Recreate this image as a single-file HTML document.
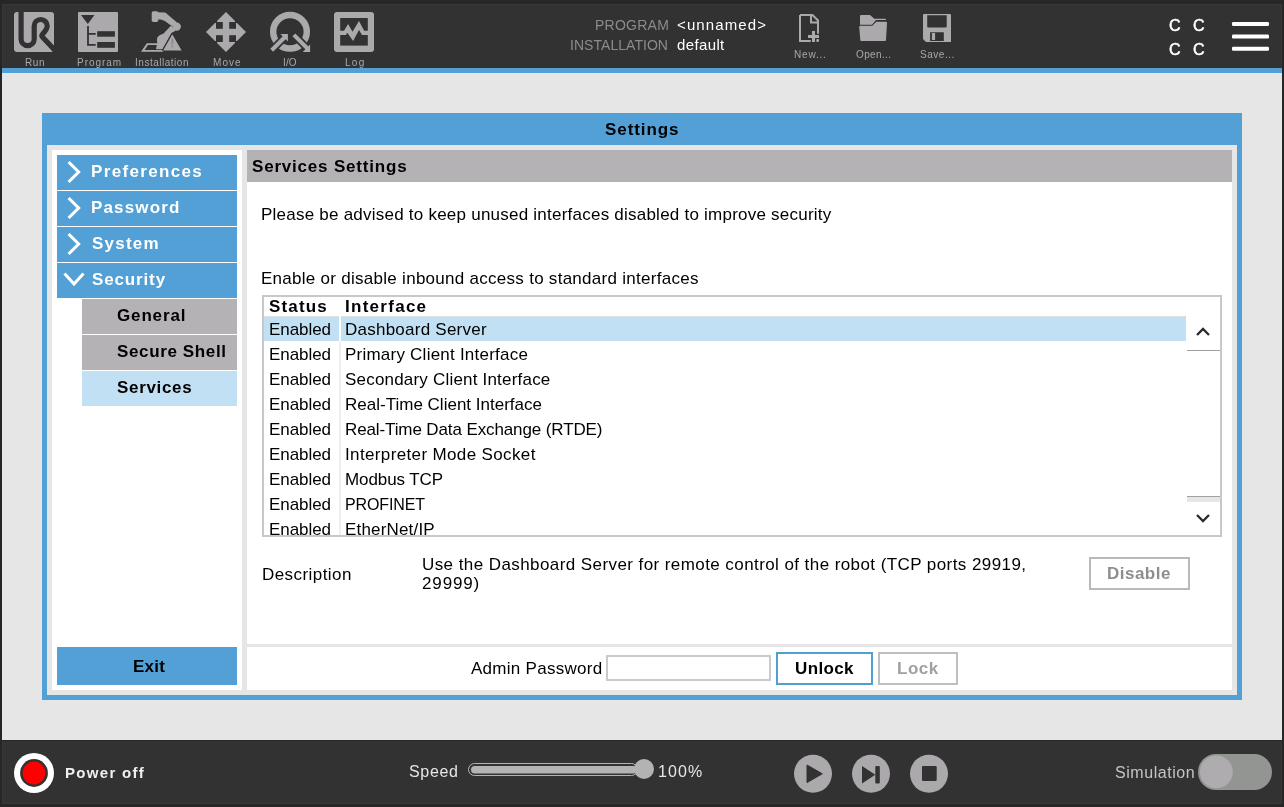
<!DOCTYPE html>
<html><head><meta charset="utf-8">
<style>
*{box-sizing:border-box;margin:0;padding:0}
html,body{width:1284px;height:807px;overflow:hidden}
body{background:#262626;position:relative;font-family:"Liberation Sans",sans-serif;color:#000}
.a{position:absolute}
.t{position:absolute;white-space:nowrap;line-height:1;will-change:transform}
svg{position:absolute;left:0;top:0}
</style></head><body>

<div class="a" style="left:2px;top:4px;width:1280px;height:64px;background:#323232"></div>
<div class="a" style="left:2px;top:68px;width:1280px;height:5px;background:#52a0d5"></div>
<div class="a" style="left:2px;top:73px;width:1280px;height:667px;background:#e6e6e6"></div>
<div class="a" style="left:2px;top:741px;width:1280px;height:63px;background:#323232"></div>
<div class="a" style="left:2px;top:4px;width:1280px;height:1px;background:#373737"></div>
<div class="a" style="left:2px;top:4px;width:1px;height:64px;background:#373737"></div>
<div class="a" style="left:1281px;top:4px;width:1px;height:64px;background:#373737"></div>
<div class="a" style="left:2px;top:803px;width:1280px;height:1px;background:#373737"></div>
<div class="a" style="left:2px;top:741px;width:1px;height:63px;background:#373737"></div>
<div class="a" style="left:1281px;top:741px;width:1px;height:63px;background:#373737"></div>
<svg width="1284" height="75" viewBox="0 0 1284 75">
<rect x="14" y="12" width="40" height="40" rx="3" fill="#aba9ac"/>
<path d="M21.1,10 V39.05 A6.55,6.55 0 0 0 34.2,39.05 V26 A6.5,6.5 0 0 1 47.2,26 C47.2,28.8 45,31.5 42.7,34 C41.7,35.1 41.8,36.3 42.7,37.2 L57,52.5" stroke="#323232" stroke-width="5.2" fill="none"/>
<rect x="78" y="12" width="40" height="40" rx="1" fill="#aba9ac"/>
<path d="M81,15 H94.5 L87.8,24 Z" fill="#323232"/>
<path d="M88,26 V44.8 H95.7 M88,33.8 H95.7" stroke="#323232" stroke-width="1.8" fill="none"/>
<rect x="97.2" y="31.2" width="17.7" height="5.5" fill="#323232"/><rect x="97.2" y="42" width="17.7" height="5.8" fill="#323232"/>
<g fill="#aba9ac">
<rect x="151.7" y="11.3" width="6.6" height="10.7" rx="1.8"/>
<path d="M157.5,12.2 L164.8,12.6 Q166,12.9 167,14 L176.5,22 L177,27 L171,25.6 L164.8,21 Q162,19.2 157.5,19.3 Z"/>
<circle cx="176.7" cy="26.6" r="4.2"/>
<path d="M171.2,25.6 L163.3,33.8 Q159.5,34.6 157.6,37 Q156.4,39.5 157.3,42.6 L156,49.3 H162.4 L171.5,32.9 L175.5,30.8 Z"/>
<path d="M146.8,43.3 H157.5 V45.1 H148 L144.6,50 H163.2 V51.8 H141 Z"/>
</g>
<path d="M172.3,33.3 L182,50.4 H162.8 Z" fill="#aba9ac" stroke="#323232" stroke-width="1.4" stroke-linejoin="round"/>
<path d="M172.3,34.5 L181.6,50.6 H163.2 Z" fill="#aba9ac"/>
<rect x="171.4" y="38.3" width="1.9" height="6.3" rx="0.8" fill="#8e8c8f"/><rect x="171.4" y="45.6" width="1.9" height="1.8" fill="#8e8c8f"/>
<g fill="#aba9ac">
<path d="M226,12 L235,21 V22 H217 V21 Z"/>
<path d="M226,52 L235,43 V42 H217 V43 Z"/>
<path d="M206,32 L215,23 H216 V41 H215 Z"/>
<path d="M246,32 L237,23 H236 V41 H237 Z"/>
<rect x="222.8" y="21" width="6.4" height="22"/><rect x="215" y="28.8" width="22" height="6.4"/>
</g>
<circle cx="290" cy="31.75" r="16.8" stroke="#aba9ac" stroke-width="6.4" fill="none"/>
<path d="M271,51 L286,36 M293.5,34.5 L308,49" stroke="#323232" stroke-width="7.6" fill="none"/>
<path d="M271.7,50.3 L286.5,35.5 M293.9,34.9 L308.5,49.5" stroke="#aba9ac" stroke-width="4.1" fill="none"/>
<path d="M280.4,34.1 H287.9 V41.6 Z" fill="#aba9ac"/>
<path d="M310.1,44.6 V52 H302.7 Z" fill="#aba9ac"/>
<rect x="334" y="12" width="40" height="40" rx="3" fill="#aba9ac"/>
<rect x="340.2" y="18" width="27.6" height="27.6" fill="#323232"/>
<path d="M340,30.7 H344 L348.1,24.1 L352.5,31.7 L359,21 L364.2,30.7 H368 V35 H362 L359,30.1 L353.1,41 L347.3,32.7 L345.9,35 H340 Z" fill="#aba9ac"/>
<path d="M800,15 H812.5 L818,20.5 V33.8 M810.8,41 H800 V15 M811,15 V22.4 H818" stroke="#aba9ac" stroke-width="2" fill="none"/>
<rect x="812" y="31" width="3" height="11" fill="#aba9ac"/><rect x="808" y="35" width="11" height="3" fill="#aba9ac"/><rect x="816.3" y="39" width="2.7" height="3" rx="1" fill="#aba9ac"/>
<path d="M860,16 Q860,15 861,15 H870 L874.3,18.7 H885 Q886,18.7 886,20 V20 H876 L872,24.8 H860 Z" fill="#aba9ac"/>
<path d="M859.2,27 Q859.2,25.8 860.5,25.8 H872.3 L876.3,21.8 H886 Q887,21.8 887,23 L886,40 Q886,41 885,41 H861 Q860.4,41 860.3,40 Z" fill="#aba9ac"/>
<path fill-rule="evenodd" fill="#aba9ac" d="M924,14 H950 Q951,14 951,15 V42 H926 L923,39 V15 Q923,14 924,14 Z M927.2,15.2 H946.7 V26.5 Q946.7,27.6 945.6,27.6 H928.3 Q927.2,27.6 927.2,26.5 Z M930.1,32.3 H943.8 V41 H930.1 Z"/>
<rect x="931.9" y="33" width="3.2" height="7" fill="#aba9ac"/>
<rect x="1232" y="22" width="37" height="4" rx="1.2" fill="#fff"/>
<rect x="1232" y="34.5" width="37" height="4" rx="1.2" fill="#fff"/>
<rect x="1232" y="46.7" width="37" height="4" rx="1.2" fill="#fff"/>
</svg>
<div class="t" style="left:25.00px;top:58px;font-size:10px;letter-spacing:0.625px;color:#a9a7aa;">Run</div>
<div class="t" style="left:76.80px;top:58px;font-size:10px;letter-spacing:0.967px;color:#a9a7aa;">Program</div>
<div class="t" style="left:135.40px;top:58px;font-size:10px;letter-spacing:0.518px;color:#a9a7aa;">Installation</div>
<div class="t" style="left:212.80px;top:58px;font-size:10px;letter-spacing:1.050px;color:#a9a7aa;">Move</div>
<div class="t" style="left:282.90px;top:58px;font-size:10px;letter-spacing:0.125px;color:#a9a7aa;">I/O</div>
<div class="t" style="left:344.80px;top:58px;font-size:10px;letter-spacing:1.275px;color:#a9a7aa;">Log</div>
<div class="t" style="left:594.50px;top:18px;font-size:14px;letter-spacing:0.242px;color:#8c8c8c;">PROGRAM</div>
<div class="t" style="left:570.35px;top:38px;font-size:14px;letter-spacing:0.041px;color:#8c8c8c;">INSTALLATION</div>
<div class="t" style="left:677.30px;top:17px;font-size:15px;letter-spacing:1.119px;color:#fff;">&lt;unnamed&gt;</div>
<div class="t" style="left:677.40px;top:37px;font-size:15px;letter-spacing:0.375px;color:#fff;">default</div>
<div class="t" style="left:793.60px;top:50px;font-size:10px;letter-spacing:0.820px;color:#a9a7aa;">New...</div>
<div class="t" style="left:856.35px;top:50px;font-size:10px;letter-spacing:0.375px;color:#a9a7aa;">Open...</div>
<div class="t" style="left:920.15px;top:50px;font-size:10px;letter-spacing:0.533px;color:#a9a7aa;">Save...</div>
<div class="t" style="left:1168.80px;top:18px;font-size:16px;letter-spacing:0.000px;color:#fff;-webkit-text-stroke:0.5px #fff;">C</div>
<div class="t" style="left:1192.80px;top:18px;font-size:16px;letter-spacing:0.000px;color:#fff;-webkit-text-stroke:0.5px #fff;">C</div>
<div class="t" style="left:1168.80px;top:42px;font-size:16px;letter-spacing:0.000px;color:#fff;-webkit-text-stroke:0.5px #fff;">C</div>
<div class="t" style="left:1192.80px;top:42px;font-size:16px;letter-spacing:0.000px;color:#fff;-webkit-text-stroke:0.5px #fff;">C</div>
<div class="a" style="left:42px;top:113px;width:1200px;height:587px;background:#52a0d5"></div>
<div class="a" style="left:47px;top:145px;width:1190px;height:550px;background:#e6e6e6"></div>
<div class="t" style="left:605.45px;top:121px;font-size:17px;font-weight:bold;letter-spacing:0.921px;color:#000;">Settings</div>
<div class="a" style="left:52px;top:150px;width:190px;height:540px;background:#fff"></div>
<div class="a" style="left:247px;top:150px;width:985px;height:494px;background:#fff"></div>
<div class="a" style="left:247px;top:150px;width:985px;height:32px;background:#b4b2b5"></div>
<div class="a" style="left:247px;top:647px;width:985px;height:43px;background:#fff"></div>
<div class="a" style="left:57px;top:155px;width:180px;height:35px;background:#52a0d5"></div>
<div class="t" style="left:90.90px;top:163px;font-size:17px;font-weight:bold;letter-spacing:1.340px;color:#fff;">Preferences</div>
<div class="a" style="left:57px;top:191px;width:180px;height:35px;background:#52a0d5"></div>
<div class="t" style="left:90.90px;top:199px;font-size:17px;font-weight:bold;letter-spacing:1.164px;color:#fff;">Password</div>
<div class="a" style="left:57px;top:227px;width:180px;height:35px;background:#52a0d5"></div>
<div class="t" style="left:91.55px;top:235px;font-size:17px;font-weight:bold;letter-spacing:1.240px;color:#fff;">System</div>
<div class="a" style="left:57px;top:263px;width:180px;height:35px;background:#52a0d5"></div>
<div class="t" style="left:91.55px;top:271px;font-size:17px;font-weight:bold;letter-spacing:0.857px;color:#fff;">Security</div>
<svg width="300" height="300" viewBox="0 0 300 300" style="left:0;top:0">
<path d="M68.6,162.0 L78.6,172.0 L68.6,182.0" stroke="#fff" stroke-width="3.1" fill="none"/>
<path d="M68.6,198.0 L78.6,208.0 L68.6,218.0" stroke="#fff" stroke-width="3.1" fill="none"/>
<path d="M68.6,234.0 L78.6,244.0 L68.6,254.0" stroke="#fff" stroke-width="3.1" fill="none"/>
<path d="M64.5,273.5 L74,284 L83.5,273.5" stroke="#fff" stroke-width="3" fill="none"/>
</svg>
<div class="a" style="left:82px;top:299px;width:155px;height:35px;background:#b4b2b5"></div>
<div class="t" style="left:116.95px;top:307px;font-size:17px;font-weight:bold;letter-spacing:0.850px;color:#000;">General</div>
<div class="a" style="left:82px;top:335px;width:155px;height:35px;background:#b4b2b5"></div>
<div class="t" style="left:117.15px;top:343px;font-size:17px;font-weight:bold;letter-spacing:0.632px;color:#000;">Secure Shell</div>
<div class="a" style="left:82px;top:371px;width:155px;height:35px;background:#c2e0f4"></div>
<div class="t" style="left:117.15px;top:379px;font-size:17px;font-weight:bold;letter-spacing:0.679px;color:#000;">Services</div>
<div class="a" style="left:57px;top:647px;width:180px;height:38px;background:#52a0d5"></div>
<div class="t" style="left:133.30px;top:658px;font-size:17px;font-weight:bold;letter-spacing:0.233px;color:#000;">Exit</div>
<div class="t" style="left:252.05px;top:158px;font-size:17px;font-weight:bold;letter-spacing:0.803px;color:#000;">Services Settings</div>
<div class="t" style="left:261.05px;top:206px;font-size:17px;letter-spacing:0.233px;color:#000;">Please be advised to keep unused interfaces disabled to improve security</div>
<div class="t" style="left:261.05px;top:270px;font-size:17px;letter-spacing:0.278px;color:#000;">Enable or disable inbound access to standard interfaces</div>
<div class="a" style="left:262px;top:295px;width:960px;height:242px;border:2px solid #c8c8c8;background:#fff"></div>
<div class="a" style="left:264px;top:316px;width:922px;height:25px;background:#c2e0f4"></div>
<div class="a" style="left:264px;top:316px;width:922px;height:1px;background:#e0e0e0"></div>
<div class="a" style="left:339px;top:316px;width:2px;height:25px;background:#fff"></div>
<div class="a" style="left:339px;top:341px;width:2px;height:194px;background:#f0f0f0"></div>
<div class="t" style="left:269.25px;top:298px;font-size:17px;font-weight:bold;letter-spacing:1.170px;color:#000;">Status</div>
<div class="t" style="left:344.50px;top:298px;font-size:17px;font-weight:bold;letter-spacing:1.275px;color:#000;">Interface</div>
<div class="a" style="left:264px;top:297px;width:922px;height:238px;overflow:hidden">
<div class="t" style="margin-left:-264px;left:268.95px;top:24px;font-size:17px;letter-spacing:-0.067px;color:#000;">Enabled</div>
<div class="t" style="margin-left:-264px;left:344.85px;top:24px;font-size:17px;letter-spacing:0.243px;color:#000;">Dashboard Server</div>
<div class="t" style="margin-left:-264px;left:268.95px;top:49px;font-size:17px;letter-spacing:-0.067px;color:#000;">Enabled</div>
<div class="t" style="margin-left:-264px;left:344.85px;top:49px;font-size:17px;letter-spacing:0.230px;color:#000;">Primary Client Interface</div>
<div class="t" style="margin-left:-264px;left:268.95px;top:74px;font-size:17px;letter-spacing:-0.067px;color:#000;">Enabled</div>
<div class="t" style="margin-left:-264px;left:345.45px;top:74px;font-size:17px;letter-spacing:0.198px;color:#000;">Secondary Client Interface</div>
<div class="t" style="margin-left:-264px;left:268.95px;top:99px;font-size:17px;letter-spacing:-0.067px;color:#000;">Enabled</div>
<div class="t" style="margin-left:-264px;left:344.85px;top:99px;font-size:17px;letter-spacing:0.008px;color:#000;">Real-Time Client Interface</div>
<div class="t" style="margin-left:-264px;left:268.95px;top:124px;font-size:17px;letter-spacing:-0.067px;color:#000;">Enabled</div>
<div class="t" style="margin-left:-264px;left:344.85px;top:124px;font-size:17px;letter-spacing:-0.114px;color:#000;">Real-Time Data Exchange (RTDE)</div>
<div class="t" style="margin-left:-264px;left:268.95px;top:149px;font-size:17px;letter-spacing:-0.067px;color:#000;">Enabled</div>
<div class="t" style="margin-left:-264px;left:344.65px;top:149px;font-size:17px;letter-spacing:0.364px;color:#000;">Interpreter Mode Socket</div>
<div class="t" style="margin-left:-264px;left:268.95px;top:174px;font-size:17px;letter-spacing:-0.067px;color:#000;">Enabled</div>
<div class="t" style="margin-left:-264px;left:344.85px;top:174px;font-size:17px;letter-spacing:-0.094px;color:#000;">Modbus TCP</div>
<div class="t" style="margin-left:-264px;left:268.95px;top:199px;font-size:17px;letter-spacing:-0.067px;color:#000;">Enabled</div>
<div class="t" style="margin-left:-264px;left:344.90px;top:200px;font-size:16px;letter-spacing:-0.121px;color:#000;">PROFINET</div>
<div class="t" style="margin-left:-264px;left:268.95px;top:224px;font-size:17px;letter-spacing:-0.067px;color:#000;">Enabled</div>
<div class="t" style="margin-left:-264px;left:344.85px;top:224px;font-size:17px;letter-spacing:0.175px;color:#000;">EtherNet/IP</div>
</div>
<div class="a" style="left:1187px;top:350px;width:33px;height:1px;background:#a0a0a0"></div>
<div class="a" style="left:1187px;top:496px;width:33px;height:1px;background:#a0a0a0"></div>
<div class="a" style="left:1187px;top:497px;width:33px;height:5px;background:#e6e6e6"></div>
<svg width="1284" height="600" viewBox="0 0 1284 600">
<path d="M1197,335 L1203,329 L1209,335" stroke="#2a2a2a" stroke-width="2.3" fill="none"/>
<path d="M1197,515 L1203,521 L1209,515" stroke="#2a2a2a" stroke-width="2.3" fill="none"/>
</svg>
<div class="t" style="left:261.75px;top:566px;font-size:17px;letter-spacing:0.435px;color:#000;">Description</div>
<div class="t" style="left:421.70px;top:556px;font-size:17px;letter-spacing:0.421px;color:#000;">Use the Dashboard Server for remote control of the robot (TCP ports 29919,</div>
<div class="t" style="left:422.15px;top:575px;font-size:17px;letter-spacing:0.870px;color:#000;">29999)</div>
<div class="a" style="left:1089px;top:557px;width:101px;height:33px;border:2px solid #bab8bb;background:#fff"></div>
<div class="t" style="left:1107.40px;top:565px;font-size:17px;font-weight:bold;letter-spacing:0.483px;color:#8e8e8e;">Disable</div>
<div class="t" style="left:470.80px;top:660px;font-size:17px;letter-spacing:0.285px;color:#000;">Admin Password</div>
<div class="a" style="left:606px;top:655px;width:165px;height:26px;border:2px solid #cacaca;background:#fff"></div>
<div class="a" style="left:776px;top:652px;width:97px;height:33px;border:2px solid #4f9ed4;background:#fff"></div>
<div class="t" style="left:794.70px;top:660px;font-size:17px;font-weight:bold;letter-spacing:0.380px;color:#000;">Unlock</div>
<div class="a" style="left:878px;top:652px;width:80px;height:33px;border:2px solid #c0bec1;background:#fff"></div>
<div class="t" style="left:896.60px;top:660px;font-size:17px;font-weight:bold;letter-spacing:0.533px;color:#a0a0a0;">Lock</div>
<svg width="1284" height="807" viewBox="0 0 1284 807">
<circle cx="34" cy="773" r="20" fill="#fff"/><circle cx="34" cy="773" r="13.9" fill="#323232"/><circle cx="34" cy="773" r="11.4" fill="#f00"/>
<rect x="468.5" y="763.5" width="169" height="12" rx="6" fill="none" stroke="#b4b2b5" stroke-width="1"/>
<rect x="471" y="766" width="166" height="7.5" rx="3.75" fill="#b4b2b5"/>
<circle cx="644" cy="769" r="10" fill="#b4b2b5"/>
<circle cx="813" cy="773.8" r="19" fill="#aba9ac"/><path d="M807,765 L822.3,773.8 L807,782.6 Z" fill="#323232" stroke="#323232" stroke-width="1" stroke-linejoin="round"/>
<circle cx="871" cy="773.8" r="19" fill="#aba9ac"/><path d="M862,766 L875.3,774.8 L862,783.5 Z" fill="#323232"/><rect x="875.3" y="766" width="4.5" height="17.5" rx="1" fill="#323232"/>
<circle cx="929" cy="773.8" r="19" fill="#aba9ac"/><rect x="922" y="766" width="14.7" height="15" rx="1" fill="#323232"/>
<rect x="1198" y="754" width="74" height="36" rx="18" fill="#939593"/>
<circle cx="1216.4" cy="771.8" r="16.4" fill="#aeacae"/>
</svg>
<div class="t" style="left:65.30px;top:765px;font-size:15px;font-weight:bold;letter-spacing:1.312px;color:#f0f0f0;">Power off</div>
<div class="t" style="left:409.40px;top:764px;font-size:16px;letter-spacing:0.688px;color:#e6e6e6;">Speed</div>
<div class="t" style="left:657.80px;top:764px;font-size:16px;letter-spacing:1.133px;color:#e6e6e6;">100%</div>
<div class="t" style="left:1115.40px;top:765px;font-size:16px;letter-spacing:0.544px;color:#c4c4c4;">Simulation</div>
</body></html>
